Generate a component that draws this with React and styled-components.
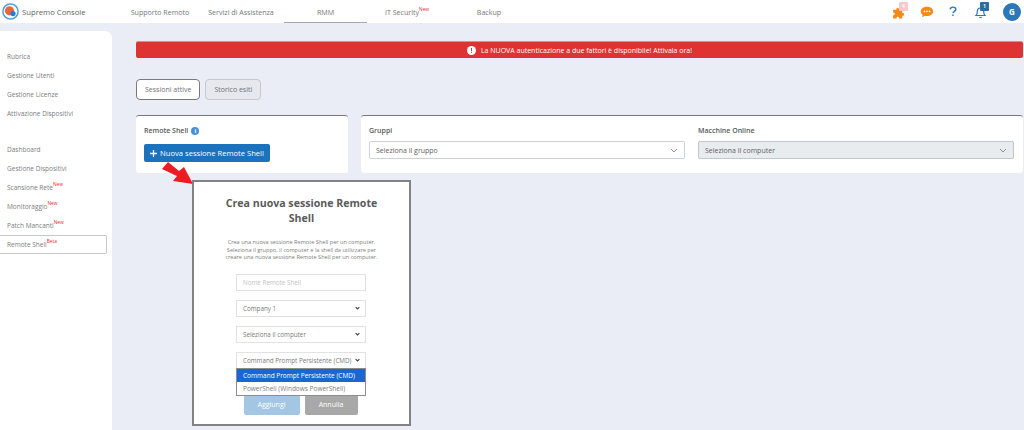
import React from 'react';
import styled, { createGlobalStyle } from 'styled-components';

const GlobalStyle = createGlobalStyle`
  html, body {
    margin: 0;
    padding: 0;
    height: 430px;
    overflow: hidden;
    background: #eaedf5;
    font-family: "Open Sans", "Liberation Sans", sans-serif;
    color: #666;
  }
  * { box-sizing: border-box; }
`;

const Page = styled.div`
  position: relative;
  width: 1024px;
  height: 430px;
  overflow: hidden;
`;

// Barra superiore
const TopBar = styled.header`
  height: 23px;
  background: #fff;
  display: flex;
  align-items: stretch;
`;

const Brand = styled.div`
  width: 122px;
  display: flex;
  align-items: center;
  gap: 3px;
  padding-left: 2px;
  font-size: 7.7px;
  color: #5a5f66;
`;

const Nav = styled.nav`
  display: flex;
  align-items: stretch;
`;

const NavItem = styled.div`
  width: ${props => props.$width}px;
  text-align: center;
  line-height: 24px;
  font-size: 7.1px;
  color: #73777b;
  white-space: nowrap;
  border-bottom: 1px solid ${props => (props.$active ? '#a9a9ac' : 'transparent')};
`;

const Sup = styled.sup`
  color: #f0262c;
  font-size: 4.8px;
  line-height: 0;
  vertical-align: 4px;
`;

const Icons = styled.div`
  margin-left: auto;
  display: flex;
  align-items: center;
  padding-right: 3px;
`;

const IconSlot = styled.div`
  position: relative;
  width: 14px;
  height: 16px;
  margin-right: ${props => props.$gap}px;
  display: flex;
  align-items: center;
  justify-content: center;
`;

const Badge = styled.span`
  position: absolute;
  top: -2px;
  right: -2px;
  width: 9px;
  height: 9px;
  border-radius: 1px;
  background: ${props => props.$bg};
  color: #fff;
  font-size: 4.5px;
  font-weight: 700;
  display: flex;
  align-items: center;
  justify-content: center;
`;

const Avatar = styled.div`
  width: 18px;
  height: 18px;
  border-radius: 50%;
  background: #2c77b8;
  color: #fff;
  font-size: 8px;
  font-weight: 700;
  display: flex;
  align-items: center;
  justify-content: center;
`;

const Body = styled.div`
  display: flex;
  height: 407px;
`;

// Menu laterale
const Sidebar = styled.aside`
  width: 112px;
  margin-top: 8px;
  background: #fff;
  border-top-right-radius: 7px;
  padding-top: 16px;
`;

const SideGroup = styled.div`
  margin-bottom: ${props => props.$gap || 0}px;
`;

const SideItem = styled.div`
  height: 19px;
  width: 107px;
  line-height: 19px;
  padding-left: 7px;
  font-size: 6.5px;
  color: #7a7d81;
  white-space: nowrap;
  ${props =>
    props.$active &&
    `
    line-height: 17px;
    background: #fff;
    border: 1px solid #c8c8cc;
    border-left: none;
    border-radius: 0 2px 2px 0;
  `}
`;

const Main = styled.main`
  flex: 1;
  padding: 18px 1px 0 24px;
  display: flex;
  flex-direction: column;
`;

const Banner = styled.div`
  height: 17px;
  background: #dd3333;
  border-top: 1px solid #e08a8a;
  border-radius: 2px;
  display: flex;
  align-items: center;
  justify-content: center;
  gap: 5px;
  color: #fff;
  font-size: 7px;
`;

const Tabs = styled.div`
  display: flex;
  gap: 5px;
  margin-top: 21px;
`;

const Tab = styled.div`
  height: 21px;
  padding: 0 8px;
  display: flex;
  align-items: center;
  border-radius: 4px;
  font-size: 7px;
  color: #6f7275;
  border: 1px solid ${props => (props.$active ? '#77797c' : '#c6c8cd')};
  background: ${props => (props.$active ? '#fff' : '#e6e8ee')};
`;

const Cards = styled.div`
  display: flex;
  gap: 13px;
  margin-top: 15px;
`;

const Card = styled.section`
  height: 58px;
  background: #fff;
  border-top: 1.5px solid #77787b;
  border-radius: 3px;
  padding: 9px 9px 0 8px;
  width: ${props => (props.$wide ? '662px' : '212px')};
  ${props => props.$wide && 'display: grid; grid-template-columns: 1fr 1fr; column-gap: 13px;'}
`;

const CardTitle = styled.div`
  display: flex;
  align-items: center;
  gap: 3px;
  height: 11px;
  font-size: 7px;
  font-weight: 600;
  color: #55585c;
`;

const InfoDot = styled.span`
  width: 8px;
  height: 8px;
  border-radius: 50%;
  background: #4a90d9;
  color: #fff;
  font-size: 6px;
  font-weight: 700;
  display: flex;
  align-items: center;
  justify-content: center;
`;

const PrimaryButton = styled.div`
  margin-top: 8px;
  width: 126px;
  height: 18px;
  background: #1b72bd;
  border-radius: 2px;
  color: #fff;
  font-size: 7.6px;
  display: flex;
  align-items: center;
  justify-content: center;
  gap: 3px;
  white-space: nowrap;
`;

const Field = styled.div``;

const FakeSelect = styled.div`
  margin-top: 5px;
  height: 18px;
  border: 1px solid ${props => (props.$disabled ? '#c3c6ca' : '#cdd0d4')};
  border-radius: 2px;
  background: ${props => (props.$disabled ? '#e9ecef' : '#fff')};
  padding: 0 6px;
  display: flex;
  align-items: center;
  justify-content: space-between;
  font-size: 7px;
  color: #5c6065;
`;

// Riquadro sovrapposto allo screenshot
const Dialog = styled.div`
  position: absolute;
  left: 192px;
  top: 180px;
  width: 219px;
  height: 246px;
  background: #fff;
  border: 2px solid #808285;
  display: flex;
  flex-direction: column;
  align-items: center;
  padding-top: 14px;
`;

const DialogTitle = styled.h2`
  margin: 0;
  width: 165px;
  font-size: 10.6px;
  line-height: 14.5px;
  font-weight: 700;
  text-align: center;
  color: #5a5a5a;
`;

const DialogText = styled.p`
  margin: 14px 0 0;
  font-size: 5.6px;
  line-height: 7.6px;
  text-align: center;
  color: #7d7d7d;
  white-space: nowrap;
`;

const Form = styled.div`
  position: relative;
  width: 130px;
  margin: 12px 1px 0 0;
  display: flex;
  flex-direction: column;
  gap: 9px;
`;

const DialogInput = styled.div`
  height: 17px;
  border: 1px solid #e2e2e2;
  padding: 0 5px 0 6px;
  display: flex;
  align-items: center;
  justify-content: space-between;
  font-size: 6.3px;
  color: ${props => (props.$placeholder ? '#c4c4c4' : '#7a7a7a')};
  white-space: nowrap;
`;

const Options = styled.div`
  position: absolute;
  left: 0;
  right: 0;
  top: 94px;
  border: 1px solid #8c8c8c;
  background: #fff;
  z-index: 2;
`;

const Option = styled.div`
  height: 13px;
  padding-left: 6px;
  display: flex;
  align-items: center;
  font-size: 6.5px;
  white-space: nowrap;
  background: ${props => (props.$selected ? '#1967d2' : '#fff')};
  color: ${props => (props.$selected ? '#fff' : '#7a7a7a')};
`;

const Actions = styled.div`
  display: flex;
  gap: 5px;
  margin: 26px 2px 0 0;
`;

const DialogButton = styled.div`
  height: 20px;
  width: ${props => (props.$muted ? '53px' : '56px')};
  border-radius: 2px;
  background: ${props => (props.$muted ? '#a8a8a8' : '#a3c6e4')};
  color: #fff;
  font-size: 7px;
  display: flex;
  align-items: center;
  justify-content: center;
`;

const ArrowSvg = styled.svg`
  position: absolute;
  left: 160px;
  top: 160px;
`;

const Chevron = ({ thin }) => (
  <svg width={thin ? 8 : 5} height={thin ? 5 : 4} viewBox="0 0 8 5" fill="none">
    <path
      d="M1 1l3 3 3-3"
      stroke={thin ? '#777' : '#444'}
      strokeWidth={thin ? 0.8 : 1.8}
    />
  </svg>
);

const Logo = () => (
  <svg width="17" height="17" viewBox="0 0 17 17">
    <circle cx="8.5" cy="8.5" r="7.6" fill="#fff" stroke="#4aa3e0" strokeWidth="1.5" />
    <circle cx="7.5" cy="7.8" r="4.6" fill="#f0643c" />
    <circle cx="11" cy="10.6" r="2.6" fill="#1f7fd0" />
  </svg>
);

const Puzzle = () => (
  <svg width="14" height="14" viewBox="0 0 13 13">
    <path
      d="M1 4.5h3c-.7-2.4 3.2-2.4 2.5 0h3v3c2.4-.7 2.4 3.2 0 2.5v2.5H6.5c.6-2-2.8-2-2.2 0H1V9.5c2 .6 2-3 0-2.4z"
      fill="#f28a1c"
    />
  </svg>
);

const Chat = () => (
  <svg width="14" height="12" viewBox="0 0 14 12">
    <path
      d="M7 .8c3.4 0 6.2 2 6.2 4.6S10.4 10 7 10c-.7 0-1.4-.1-2-.3L2 11.2l.7-2.7C1.5 7.7.8 6.6.8 5.4.8 2.8 3.6.8 7 .8z"
      fill="#f28a1c"
    />
    <circle cx="4.5" cy="5.4" r=".8" fill="#fff" />
    <circle cx="7" cy="5.4" r=".8" fill="#fff" />
    <circle cx="9.5" cy="5.4" r=".8" fill="#fff" />
  </svg>
);

const Bell = () => (
  <svg width="13" height="14" viewBox="0 0 13 14" fill="none" stroke="#2c77b8" strokeWidth="1.2">
    <path d="M2 10.5c1-1 1.3-2 1.3-4 0-2 1.3-3.5 3.2-3.5s3.2 1.5 3.2 3.5c0 2 .3 3 1.3 4z" />
    <path d="M5.3 12.5h2.4" />
  </svg>
);

const Alert = () => (
  <svg width="9" height="9" viewBox="0 0 9 9">
    <circle cx="4.5" cy="4.5" r="4.5" fill="#fff" />
    <rect x="4" y="2" width="1" height="3.2" fill="#dd3333" />
    <rect x="4" y="5.9" width="1" height="1" fill="#dd3333" />
  </svg>
);

const App = () => (
  <Page>
    <GlobalStyle />
    <TopBar>
      <Brand>
        <Logo />
        Supremo Console
      </Brand>
      <Nav>
        <NavItem $width={76}>Supporto Remoto</NavItem>
        <NavItem $width={86}>Servizi di Assistenza</NavItem>
        <NavItem $width={83} $active>RMM</NavItem>
        <NavItem $width={80}>IT Security<Sup>New</Sup></NavItem>
        <NavItem $width={84}>Backup</NavItem>
      </Nav>
      <Icons>
        <IconSlot $gap={14}>
          <Puzzle />
          <Badge $bg="#f7c9cb">4</Badge>
        </IconSlot>
        <IconSlot $gap={12}><Chat /></IconSlot>
        <IconSlot $gap={13}>
          <svg width="8" height="11" viewBox="0 0 10 13" fill="none" stroke="#2c77b8" strokeWidth="1.8">
            <path d="M1.5 3.8C1.7 2 3.2 1 5 1c2 0 3.5 1.2 3.5 2.9 0 2.3-3.5 2.5-3.5 4.9" />
            <path d="M5 10.3V12" />
          </svg>
        </IconSlot>
        <IconSlot $gap={16}>
          <Bell />
          <Badge $bg="#2c6ca8">1</Badge>
        </IconSlot>
        <Avatar>G</Avatar>
      </Icons>
    </TopBar>
    <Body>
      <Sidebar>
        <SideGroup $gap={17}>
          <SideItem>Rubrica</SideItem>
          <SideItem>Gestione Utenti</SideItem>
          <SideItem>Gestione Licenze</SideItem>
          <SideItem>Attivazione Dispositivi</SideItem>
        </SideGroup>
        <SideGroup>
          <SideItem>Dashboard</SideItem>
          <SideItem>Gestione Dispositivi</SideItem>
          <SideItem>Scansione Rete<Sup>New</Sup></SideItem>
          <SideItem>Monitoraggio<Sup>New</Sup></SideItem>
          <SideItem>Patch Mancanti<Sup>New</Sup></SideItem>
          <SideItem $active>Remote Shell<Sup>Beta</Sup></SideItem>
        </SideGroup>
      </Sidebar>
      <Main>
        <Banner>
          <Alert />
          La NUOVA autenticazione a due fattori è disponibile! Attivala ora!
        </Banner>
        <Tabs>
          <Tab $active>Sessioni attive</Tab>
          <Tab>Storico esiti</Tab>
        </Tabs>
        <Cards>
          <Card>
            <CardTitle>Remote Shell <InfoDot>i</InfoDot></CardTitle>
            <PrimaryButton>
              <svg width="7" height="7" viewBox="0 0 7 7" fill="none" stroke="#fff" strokeWidth="1.3">
                <path d="M3.5 0v7M0 3.5h7" />
              </svg>
              Nuova sessione Remote Shell
            </PrimaryButton>
          </Card>
          <Card $wide>
            <Field>
              <CardTitle>Gruppi</CardTitle>
              <FakeSelect>Seleziona il gruppo <Chevron thin /></FakeSelect>
            </Field>
            <Field>
              <CardTitle>Macchine Online</CardTitle>
              <FakeSelect $disabled>Seleziona il computer <Chevron thin /></FakeSelect>
            </Field>
          </Card>
        </Cards>
      </Main>
    </Body>
    <ArrowSvg width="34" height="28" viewBox="0 0 34 28">
      <path d="M2 9L8 2l11 9 5-4 9 17-20-3 4-5z" fill="#ed1c24" />
    </ArrowSvg>
    <Dialog>
      <DialogTitle>Crea nuova sessione Remote Shell</DialogTitle>
      <DialogText>
        Crea una nuova sessione Remote Shell per un computer.
        <br />
        Seleziona il gruppo, il computer e la shell da utilizzare per
        <br />
        creare una nuova sessione Remote Shell per un computer.
      </DialogText>
      <Form>
        <DialogInput $placeholder>Nome Remote Shell</DialogInput>
        <DialogInput>Company 1 <Chevron /></DialogInput>
        <DialogInput>Seleziona il computer <Chevron /></DialogInput>
        <DialogInput>Command Prompt Persistente (CMD) <Chevron /></DialogInput>
        <Options>
          <Option $selected>Command Prompt Persistente (CMD)</Option>
          <Option>PowerShell (Windows PowerShell)</Option>
        </Options>
      </Form>
      <Actions>
        <DialogButton>Aggiungi</DialogButton>
        <DialogButton $muted>Annulla</DialogButton>
      </Actions>
    </Dialog>
  </Page>
);

export default App;
